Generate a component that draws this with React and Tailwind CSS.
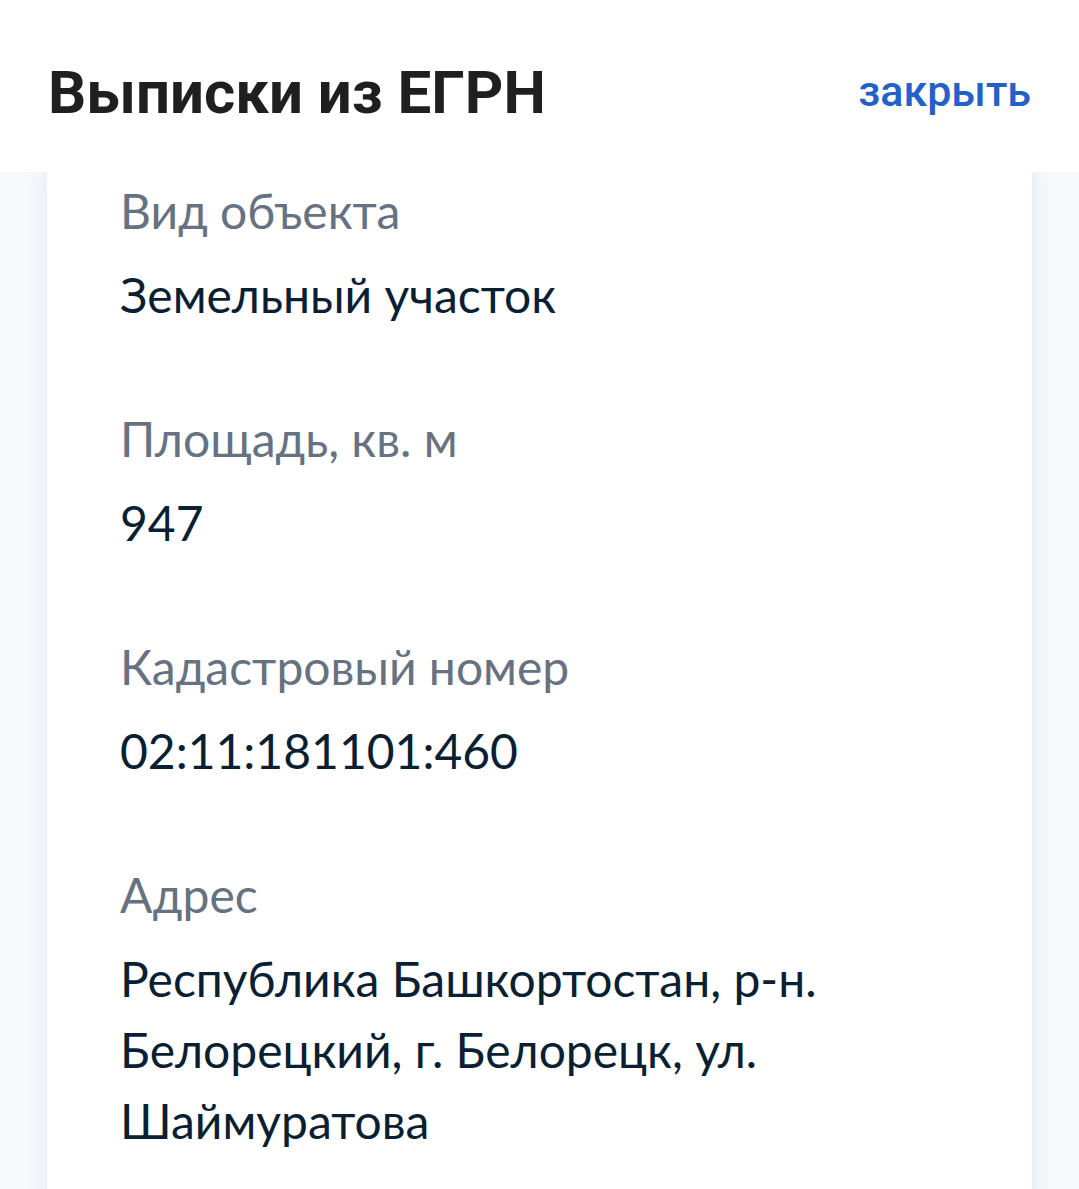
export default function App() {
  const rows = [
    { label: 'Вид объекта', value: ['Земельный участок'] },
    { label: 'Площадь, кв. м', value: ['947'] },
    { label: 'Кадастровый номер', value: ['02:11:181101:460'] },
    {
      label: 'Адрес',
      value: ['Республика Башкортостан, р-н.', 'Белорецкий, г. Белорецк, ул.', 'Шаймуратова'],
    },
  ]

  return (
    <div className="w-[1079px] h-[1189px] overflow-hidden bg-[#f6f8fc]">
      <header className="relative z-10 h-[172px] bg-white flex items-start justify-between pl-[48px] pr-[48px] pt-[58px] font-['Roboto',sans-serif]">
        <h1 className="text-[60px] font-bold leading-[70px] text-[#1f1f1f]">
          Выписки из ЕГРН
        </h1>
        <button className="mt-[8px] text-[43px] font-medium leading-[50px] text-[#2360c8]">
          закрыть
        </button>
      </header>

      <div className="mx-[47px] h-full bg-white shadow-[0_0_16px_rgba(120,150,210,0.2)] font-['Lato',sans-serif]">
        <div className="pl-[73px] pr-8 pt-[3px]">
          {rows.map((row) => (
            <div key={row.label} className="pb-[73px]">
              <div className="text-[48px] leading-[71px] text-[#66727f] mb-[13px]">
                {row.label}
              </div>
              <div className="text-[48px] leading-[71px] text-[#0b1f33]">
                {row.value.map((line) => (
                  <div key={line}>{line}</div>
                ))}
              </div>
            </div>
          ))}
        </div>
      </div>
    </div>
  )
}
